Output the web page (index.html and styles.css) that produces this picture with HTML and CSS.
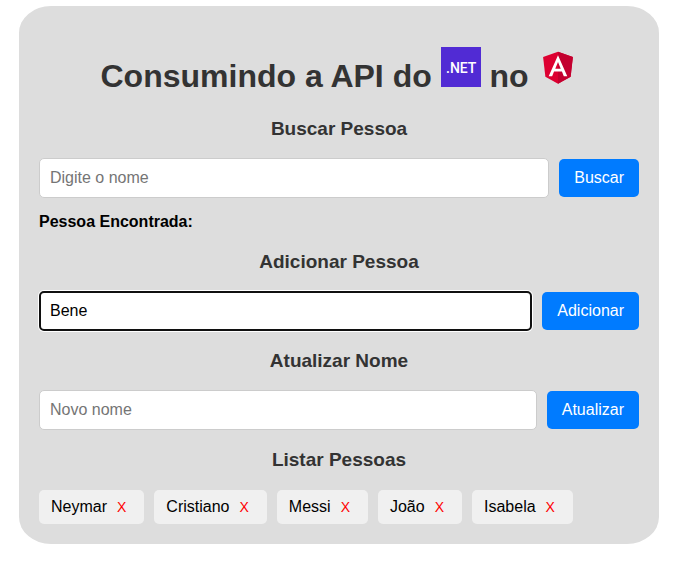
FILE: index.html
```html
<!DOCTYPE html>
<html lang="pt-BR">
<head>
  <meta charset="utf-8">
  <meta name="viewport" content="width=device-width, initial-scale=1">
  <title>Pessoas</title>
  <link rel="stylesheet" href="styles.css">
</head>
<body>
  <main class="container">
    <h1 class="title">
      Consumindo a API do
      <svg class="logo" viewBox="0 0 40 40" role="img" aria-label=".NET">
        <rect width="40" height="40" fill="#512bd4"/>
        <text class="logo-text" x="5" y="26" fill="#fff">.NET</text>
      </svg>
      no
      <svg class="logo" viewBox="0 0 250 250" role="img" aria-label="Angular">
        <path fill="#dd0031" d="M125 30 31.9 63.2l14.2 123.1L125 230l78.9-43.7 14.2-123.1z"/>
        <path fill="#c3002f" d="M125 30v200l78.9-43.7 14.2-123.1z"/>
        <path fill="#fff" d="M125 52.1 66.8 182.6h21.7l11.7-29.2h49.4l11.7 29.2H183L125 52.1zm17 83.3h-34l17-40.9z"/>
      </svg>
    </h1>

    <h3><label for="busca">Buscar Pessoa</label></h3>
    <form class="row">
      <input id="busca" type="text" placeholder="Digite o nome">
      <button class="action" type="button">Buscar</button>
    </form>
    <p class="result">Pessoa Encontrada:</p>

    <h3><label for="adiciona">Adicionar Pessoa</label></h3>
    <form class="row">
      <input id="adiciona" class="active" type="text" value="Bene">
      <button class="action" type="button">Adicionar</button>
    </form>

    <h3><label for="atualiza">Atualizar Nome</label></h3>
    <form class="row">
      <input id="atualiza" type="text" placeholder="Novo nome">
      <button class="action" type="button">Atualizar</button>
    </form>

    <h3>Listar Pessoas</h3>
    <ul class="people">
      <li>Neymar<button class="remove" type="button">X</button></li>
      <li>Cristiano<button class="remove" type="button">X</button></li>
      <li>Messi<button class="remove" type="button">X</button></li>
      <li>João<button class="remove" type="button">X</button></li>
      <li>Isabela<button class="remove" type="button">X</button></li>
    </ul>
  </main>
</body>
</html>
```
FILE: styles.css
```css
* {
  box-sizing: border-box;
}

body {
  margin: 6px 22px 24px 19px;
  background: #fff;
  color: #000;
  font: 16px/18px Arial, "Liberation Sans", sans-serif;
}

.container {
  max-width: 640px;
  margin: 0 auto;
  padding: 20px;
  display: flow-root;
  background: #ddd;
  border-radius: 5%;
}

.title {
  margin: 21px 0 24px;
  color: #333;
  font-size: 32px;
  line-height: 36px;
  text-align: center;
}

.logo {
  width: 40px;
  height: 40px;
}

.logo-text {
  font: 500 14px Roboto, "Open Sans", sans-serif;
}

h3 {
  margin: 19px 0;
  color: #333;
  font-size: 19px;
  line-height: 21px;
  text-align: center;
}

.row {
  display: flex;
  align-items: center;
  gap: 10px;
}

.row input {
  flex: 1;
  min-width: 0;
  height: 40px;
  padding: 0 10px;
  border: 1px solid #ccc;
  border-radius: 5px;
  background: #fff;
  color: #000;
  font: inherit;
}

.row input::placeholder {
  color: #757575;
}

.row input.active,
.row input:focus {
  padding: 0 9px;
  border: 2px solid #101010;
  outline: 0;
  box-shadow: 0 0 0 1px #fff;
}

.action {
  padding: 10px 15px;
  border: 0;
  border-radius: 5px;
  background: #007bff;
  color: #fff;
  font: inherit;
  cursor: pointer;
}

.result {
  margin: 15px 0 20px;
  font-weight: bold;
}

.people {
  display: flex;
  flex-wrap: wrap;
  gap: 10px;
  margin: 20px 0 0;
  padding: 0;
  list-style: none;
}

.people li {
  display: flex;
  align-items: baseline;
  padding: 8px 12px;
  border-radius: 5px;
  background: #f0f0f0;
}

.remove {
  margin-left: 4px;
  padding: 0 6px;
  border: 0;
  background: transparent;
  color: #f00;
  font: 14px/16px Arial, "Liberation Sans", sans-serif;
  cursor: pointer;
}
```
